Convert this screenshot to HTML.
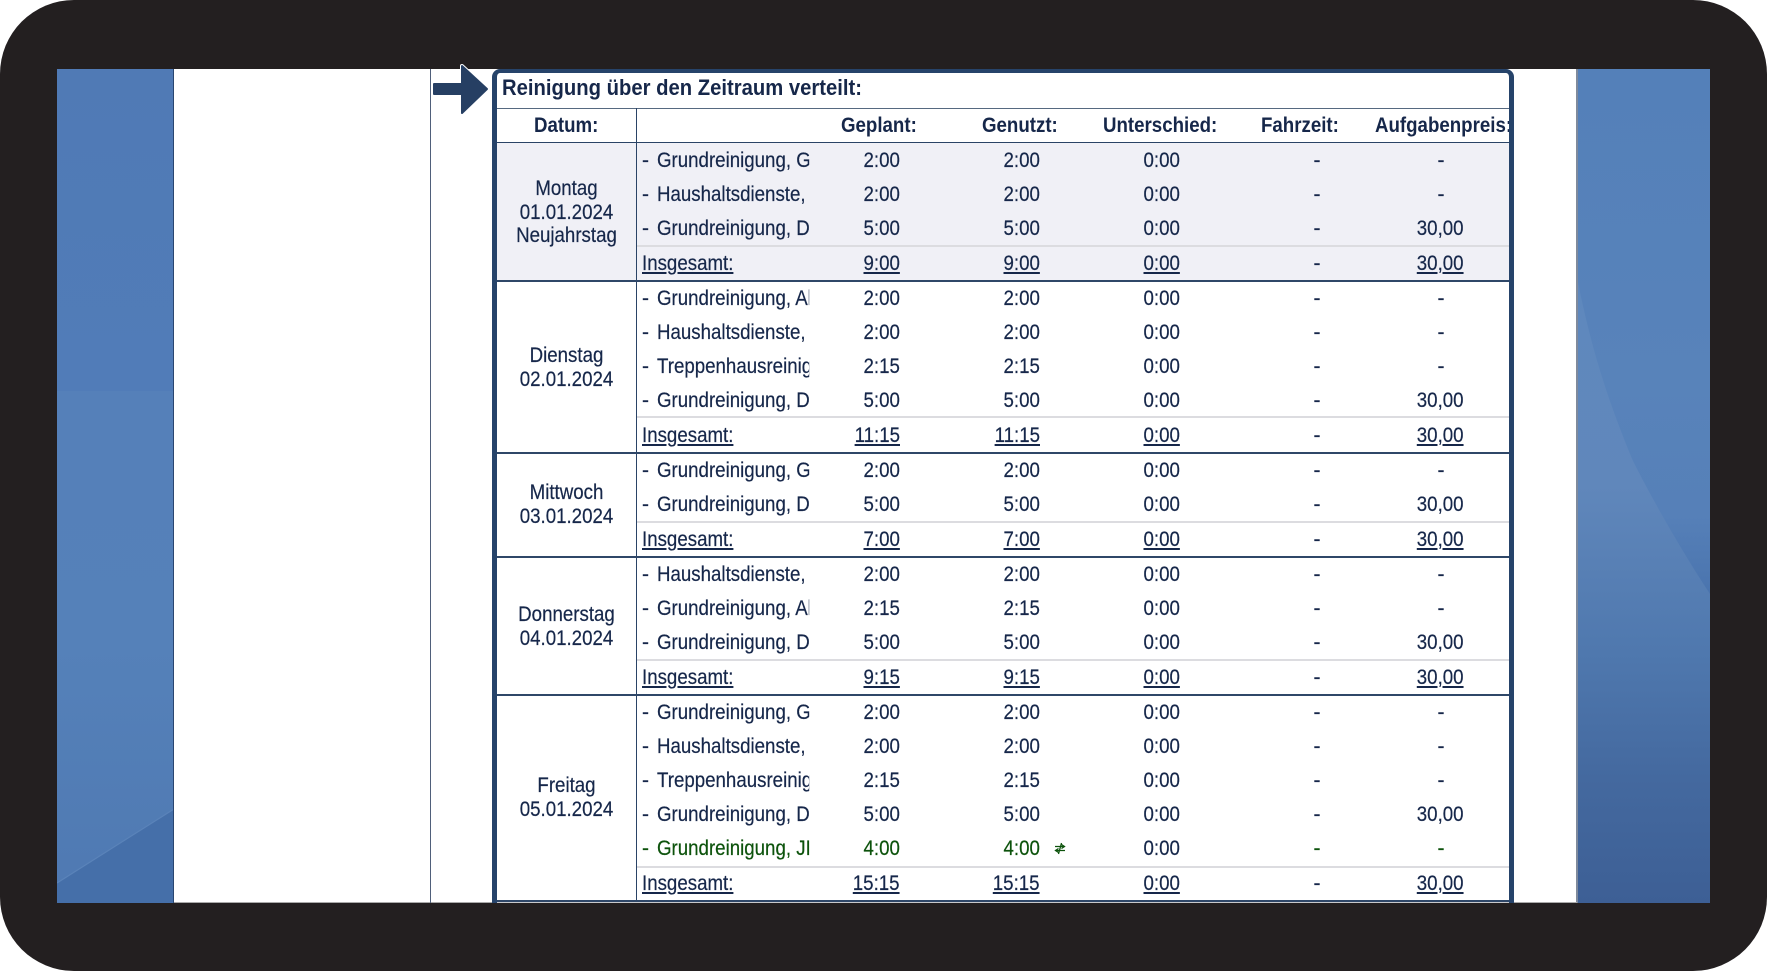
<!DOCTYPE html>
<html lang="de"><head><meta charset="utf-8"><title>Reinigung</title>
<style>
html,body{margin:0;padding:0;background:#fff}
#f{position:relative;width:1767px;height:971px;overflow:hidden;font-family:"Liberation Sans",Arial,sans-serif;font-size:21px;line-height:24px;color:#16274a;background:#fff;-webkit-text-stroke:.2px}
.a{position:absolute}
.ln{position:absolute;left:497px;width:1012px;height:1.5px;background:#2f4768}
.sb{position:absolute;left:637px;width:872px;height:2px;background:#dcdce0}
.r{position:absolute;left:0;width:1767px;height:24px;margin-top:.6px}
.r span{position:absolute;top:0;white-space:nowrap}
.d{left:642px}
.n{left:657px;width:171px;overflow:hidden;transform:scaleX(.89);transform-origin:0 50%}
.i{left:642px;transform:scaleX(.89);transform-origin:0 50%;text-decoration:underline}
.p,.g,.u,.m{transform:scaleX(.89);transform-origin:100% 50%}
.p{right:867px}.g{right:727px}.u{right:587px}.m{right:303px}
.z{left:1317px;transform:translateX(-50%)}
.y{left:1441px;transform:translateX(-50%)}
.t .p,.t .g,.t .u,.t .m{text-decoration:underline}
.gr{color:#0d530c}
.dt{position:absolute;left:497px;width:139px;text-align:center;white-space:nowrap;margin-top:1px}
.dt div{height:23.7px;line-height:24px;transform:scaleX(.89)}
.h{position:absolute;top:114px;font-weight:bold;white-space:nowrap;transform:scaleX(.89);transform-origin:0 50%;-webkit-text-stroke:0}
</style></head><body>
<div id="f">
<div class="a" style="left:0;top:0;width:1767px;height:971px;background:#231f20;border-radius:74px"></div>
<svg class="a" style="left:57px;top:69px" width="117" height="834" viewBox="0 0 117 834">
<defs><linearGradient id="l1" x1="0" y1="0" x2="0" y2="1"><stop offset="0" stop-color="#507ab5"/><stop offset="1" stop-color="#517cb8"/></linearGradient>
<linearGradient id="l2" x1="0" y1="0" x2="0" y2="1"><stop offset="0" stop-color="#5580b9"/><stop offset=".5" stop-color="#5581b9"/><stop offset="1" stop-color="#4f79b2"/></linearGradient></defs>
<rect width="117" height="322" fill="url(#l1)"/><rect y="322" width="117" height="512" fill="url(#l2)"/>
<path d="M0 814L117 740V834H0Z" fill="#456fa9"/>
<path d="M0 814L117 740" stroke="#5a83b9" stroke-width="1.2" fill="none"/>
</svg>
<svg class="a" style="left:1577px;top:69px" width="133" height="834" viewBox="0 0 133 834">
<defs><linearGradient id="r1" x1="0" y1="0" x2="0" y2="1"><stop offset="0" stop-color="#5782bb"/><stop offset=".3" stop-color="#5f88bd"/><stop offset=".5" stop-color="#6087bb"/><stop offset=".7" stop-color="#4f78ae"/><stop offset=".85" stop-color="#44699f"/><stop offset="1" stop-color="#3d5f95"/></linearGradient>
<linearGradient id="r2" x1="0" y1="0" x2="0" y2="1"><stop offset="0" stop-color="#5480b9"/><stop offset=".6" stop-color="#5883ba"/><stop offset=".85" stop-color="#5680b8"/><stop offset="1" stop-color="#4a74ae"/></linearGradient></defs>
<rect width="133" height="834" fill="url(#r1)"/>
<path d="M0 0H133V525C100 475 70 420 56 392C28 325 12 270 0 208Z" fill="url(#r2)"/>
</svg>
<div class="a" style="left:174px;top:69px;width:1403px;height:833px;background:#fff"></div>
<div class="a" style="left:173px;top:69px;width:1px;height:834px;background:#2a4670"></div>
<div class="a" style="left:1576px;top:69px;width:1.5px;height:834px;background:#7f8a9c"></div>
<div class="a" style="left:174px;top:902px;width:1403px;height:1px;background:#aaa"></div>
<div class="a" style="left:430px;top:69px;width:1px;height:834px;background:#4f5f7a"></div>

<svg class="a" style="left:430px;top:62px" width="62" height="54" viewBox="0 0 62 54">
<path d="M32 4L57 27 32 51Z" fill="none" stroke="#fff" stroke-width="4" stroke-linejoin="round"/>
<path d="M4 22H32V4L57 27 32 51V32H4Z" fill="#263f63" stroke="#263f63" stroke-width="2" stroke-linejoin="round"/>
</svg>

<div class="a" style="left:492px;top:69px;width:1022px;height:834px;box-sizing:border-box;border:5px solid #26436a;border-bottom:0;border-top-width:4px;border-radius:8px 8px 0 0"></div>
<div class="a" style="left:497px;top:142px;width:1012px;height:138px;background:#f0f0f6"></div>
<div class="a" style="left:497px;top:107.5px;width:1012px;height:1.5px;background:#566980"></div>
<div class="a" style="left:497px;top:141.5px;width:1012px;height:1.5px;background:#2a4366"></div>
<div class="a" style="left:636px;top:108px;width:1px;height:795px;background:#2a4366"></div>
<div class="sb" style="top:245px"></div><div class="ln" style="top:280px"></div>
<div class="sb" style="top:416px"></div><div class="ln" style="top:452px"></div>
<div class="sb" style="top:521px"></div><div class="ln" style="top:556px"></div>
<div class="sb" style="top:659px"></div><div class="ln" style="top:694px"></div>
<div class="sb" style="top:866px"></div><div class="ln" style="top:900px"></div>
<div class="a" style="left:497px;top:901.5px;width:1012px;height:1.5px;background:#c8c8cc"></div>

<div class="h" style="left:502px;top:76px;font-size:22.5px;transform:scaleX(.9)">Reinigung über den Zeitraum verteilt:</div>
<div class="h" style="left:534px">Datum:</div>
<div class="h" style="left:841px">Geplant:</div>
<div class="h" style="left:982px">Genutzt:</div>
<div class="h" style="left:1103px">Unterschied:</div>
<div class="h" style="left:1261px">Fahrzeit:</div>
<div class="a" style="left:1375px;top:108px;width:134px;height:33px;overflow:hidden"><div class="h" style="left:0;top:6px">Aufgabenpreis:</div></div>

<div class="dt" style="top:176px"><div>Montag</div><div>01.01.2024</div><div>Neujahrstag</div></div>
<div class="dt" style="top:343px"><div>Dienstag</div><div>02.01.2024</div></div>
<div class="dt" style="top:480px"><div>Mittwoch</div><div>03.01.2024</div></div>
<div class="dt" style="top:602px"><div>Donnerstag</div><div>04.01.2024</div></div>
<div class="dt" style="top:773px"><div>Freitag</div><div>05.01.2024</div></div>

<div class="r" style="top:148px"><span class="d">-</span><span class="n">Grundreinigung, Glas</span><span class="p">2:00</span><span class="g">2:00</span><span class="u">0:00</span><span class="z">-</span><span class="y">-</span></div>
<div class="r" style="top:182px"><span class="d">-</span><span class="n">Haushaltsdienste,</span><span class="p">2:00</span><span class="g">2:00</span><span class="u">0:00</span><span class="z">-</span><span class="y">-</span></div>
<div class="r" style="top:216px"><span class="d">-</span><span class="n">Grundreinigung, Dach</span><span class="p">5:00</span><span class="g">5:00</span><span class="u">0:00</span><span class="z">-</span><span class="m">30,00</span></div>
<div class="r t" style="top:251px"><span class="i">Insgesamt:</span><span class="p">9:00</span><span class="g">9:00</span><span class="u">0:00</span><span class="z">-</span><span class="m">30,00</span></div>

<div class="r" style="top:286px"><span class="d">-</span><span class="n">Grundreinigung, Alle</span><span class="p">2:00</span><span class="g">2:00</span><span class="u">0:00</span><span class="z">-</span><span class="y">-</span></div>
<div class="r" style="top:320px"><span class="d">-</span><span class="n">Haushaltsdienste,</span><span class="p">2:00</span><span class="g">2:00</span><span class="u">0:00</span><span class="z">-</span><span class="y">-</span></div>
<div class="r" style="top:354px"><span class="d">-</span><span class="n">Treppenhausreinigung</span><span class="p">2:15</span><span class="g">2:15</span><span class="u">0:00</span><span class="z">-</span><span class="y">-</span></div>
<div class="r" style="top:388px"><span class="d">-</span><span class="n">Grundreinigung, Dach</span><span class="p">5:00</span><span class="g">5:00</span><span class="u">0:00</span><span class="z">-</span><span class="m">30,00</span></div>
<div class="r t" style="top:423px"><span class="i">Insgesamt:</span><span class="p">11:15</span><span class="g">11:15</span><span class="u">0:00</span><span class="z">-</span><span class="m">30,00</span></div>

<div class="r" style="top:458px"><span class="d">-</span><span class="n">Grundreinigung, Glas</span><span class="p">2:00</span><span class="g">2:00</span><span class="u">0:00</span><span class="z">-</span><span class="y">-</span></div>
<div class="r" style="top:492px"><span class="d">-</span><span class="n">Grundreinigung, Dach</span><span class="p">5:00</span><span class="g">5:00</span><span class="u">0:00</span><span class="z">-</span><span class="m">30,00</span></div>
<div class="r t" style="top:527px"><span class="i">Insgesamt:</span><span class="p">7:00</span><span class="g">7:00</span><span class="u">0:00</span><span class="z">-</span><span class="m">30,00</span></div>

<div class="r" style="top:562px"><span class="d">-</span><span class="n">Haushaltsdienste,</span><span class="p">2:00</span><span class="g">2:00</span><span class="u">0:00</span><span class="z">-</span><span class="y">-</span></div>
<div class="r" style="top:596px"><span class="d">-</span><span class="n">Grundreinigung, Alle</span><span class="p">2:15</span><span class="g">2:15</span><span class="u">0:00</span><span class="z">-</span><span class="y">-</span></div>
<div class="r" style="top:630px"><span class="d">-</span><span class="n">Grundreinigung, Dach</span><span class="p">5:00</span><span class="g">5:00</span><span class="u">0:00</span><span class="z">-</span><span class="m">30,00</span></div>
<div class="r t" style="top:665px"><span class="i">Insgesamt:</span><span class="p">9:15</span><span class="g">9:15</span><span class="u">0:00</span><span class="z">-</span><span class="m">30,00</span></div>

<div class="r" style="top:700px"><span class="d">-</span><span class="n">Grundreinigung, Glas</span><span class="p">2:00</span><span class="g">2:00</span><span class="u">0:00</span><span class="z">-</span><span class="y">-</span></div>
<div class="r" style="top:734px"><span class="d">-</span><span class="n">Haushaltsdienste,</span><span class="p">2:00</span><span class="g">2:00</span><span class="u">0:00</span><span class="z">-</span><span class="y">-</span></div>
<div class="r" style="top:768px"><span class="d">-</span><span class="n">Treppenhausreinigung</span><span class="p">2:15</span><span class="g">2:15</span><span class="u">0:00</span><span class="z">-</span><span class="y">-</span></div>
<div class="r" style="top:802px"><span class="d">-</span><span class="n">Grundreinigung, Dach</span><span class="p">5:00</span><span class="g">5:00</span><span class="u">0:00</span><span class="z">-</span><span class="m">30,00</span></div>
<div class="r gr" style="top:836px"><span class="d">-</span><span class="n">Grundreinigung, JI</span><span class="p">4:00</span><span class="g">4:00</span><span class="u" style="color:#16274a">0:00</span><span class="z">-</span><span class="y">-</span></div>
<svg class="a" style="left:1054px;top:842px" width="12" height="13" viewBox="0 0 12 13"><path d="M1 4.5H10M7.5 2.5L10.5 4.5 7.5 6.5M11 8.5H2M4.5 6.5L1.5 8.5 4.5 10.5M7.5 1L4.5 12" fill="none" stroke="#0d530c" stroke-width="1.3"/></svg>
<div class="r t" style="top:871px"><span class="i">Insgesamt:</span><span class="p">15:15</span><span class="g">15:15</span><span class="u">0:00</span><span class="z">-</span><span class="m">30,00</span></div>
</div>
</body></html>
